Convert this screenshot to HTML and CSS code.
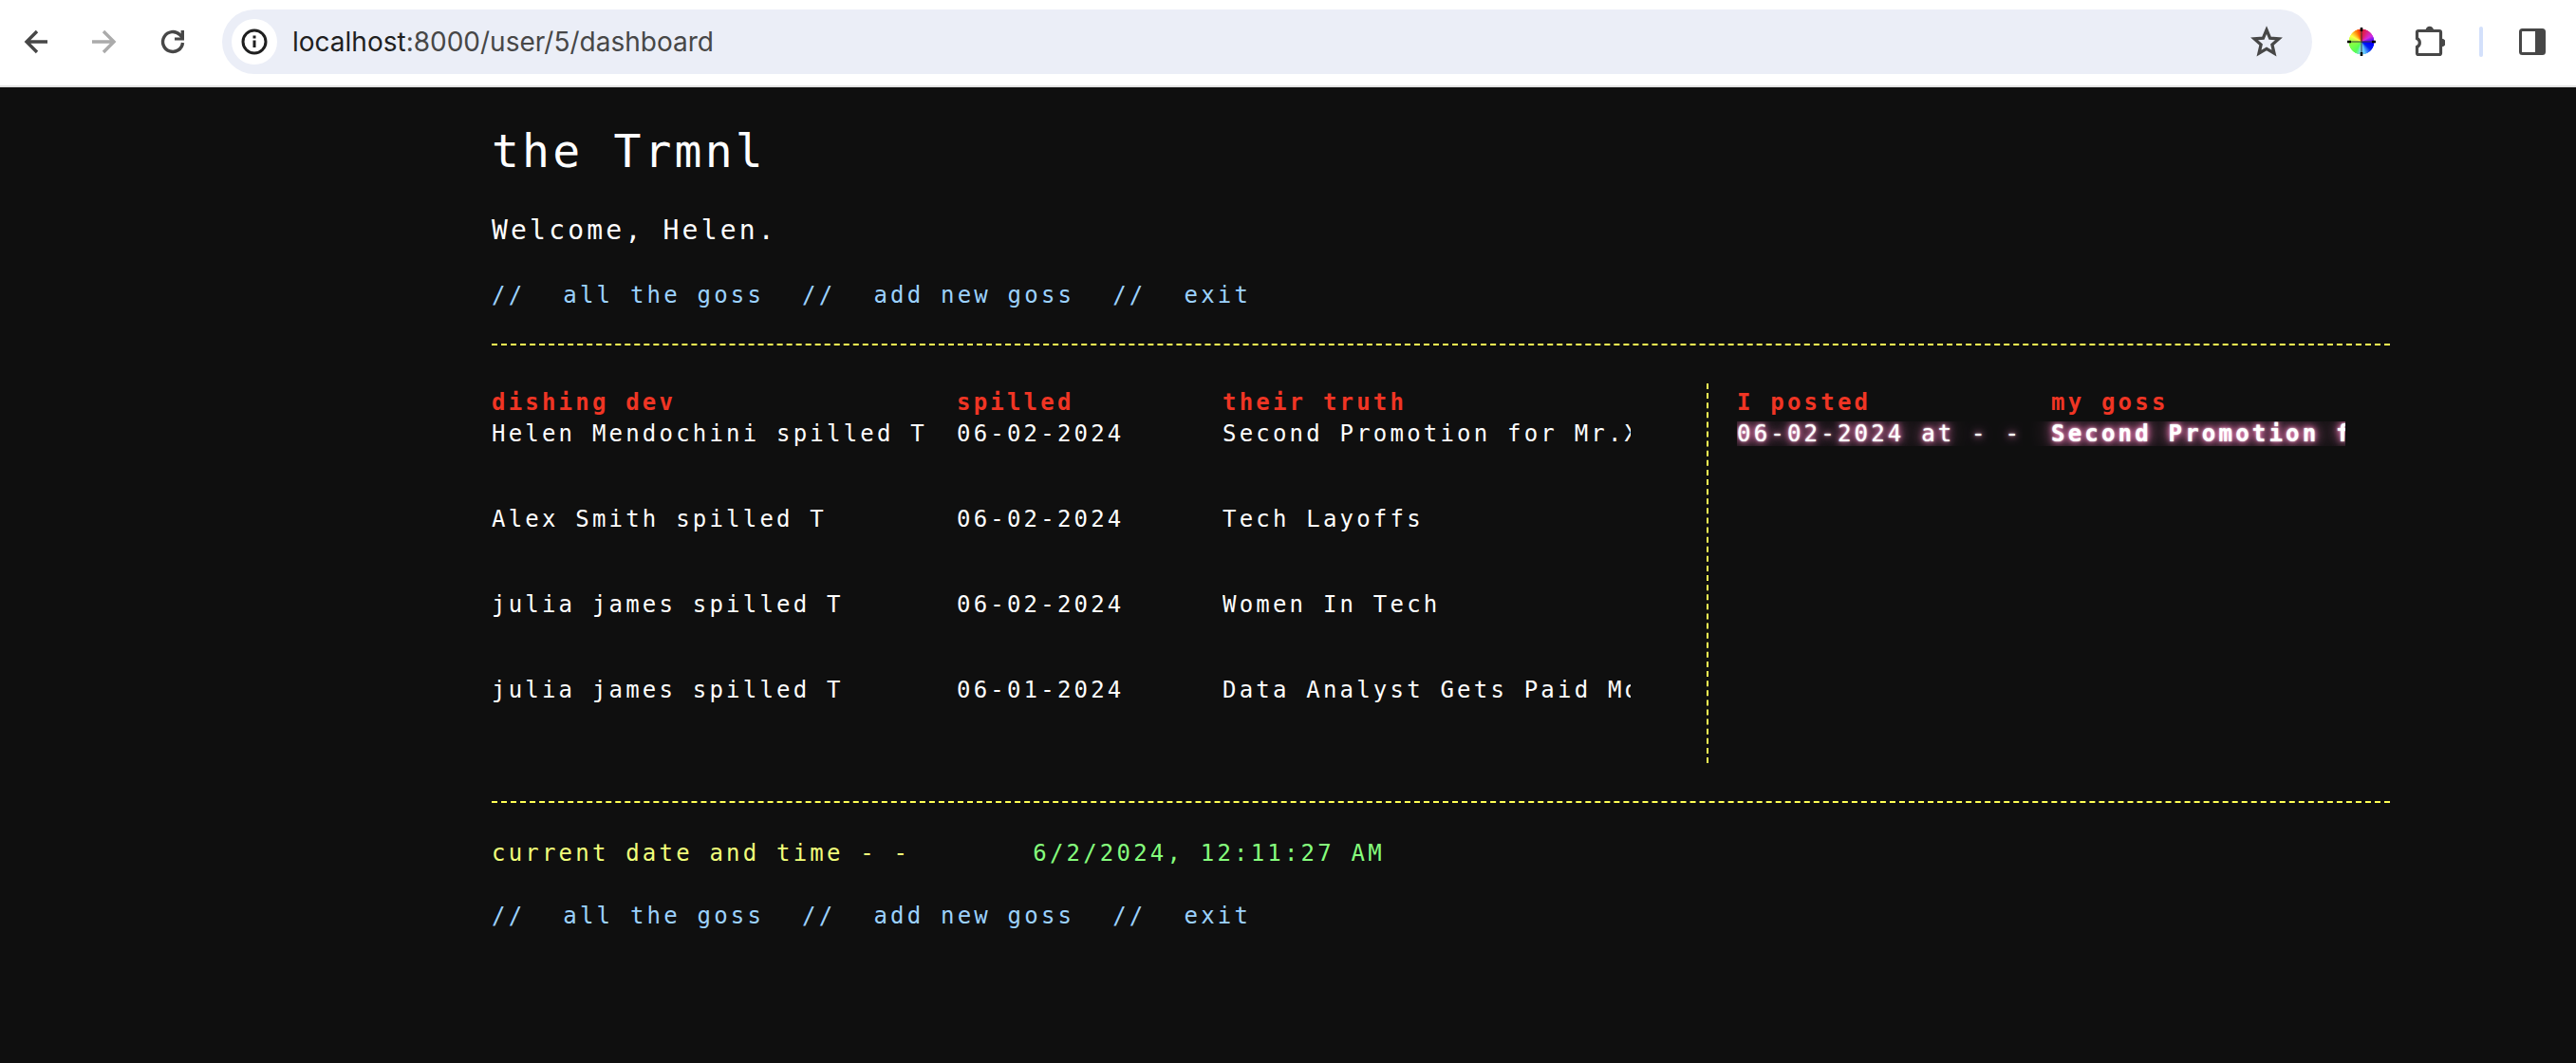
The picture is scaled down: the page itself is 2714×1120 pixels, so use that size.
FILE: index.html
```html
<!DOCTYPE html>
<html lang="en">
<head>
<meta charset="utf-8">
<meta name="viewport" content="width=device-width, initial-scale=1">
<title>the Trmnl</title>
<link rel="stylesheet" href="styles.css">
</head>
<body>
<header class="toolbar">
  <button class="tool" type="button" aria-label="Back">
    <svg class="icon" viewBox="0 0 32 32"><path d="M28 16H6M17 5L6 16l11 11" fill="none" stroke="#474747" stroke-width="3.4"/></svg>
  </button>
  <button class="tool" type="button" aria-label="Forward">
    <svg class="icon" viewBox="0 0 32 32"><path d="M3 16h22M15 5l11 11-11 11" fill="none" stroke="#ababab" stroke-width="3.4"/></svg>
  </button>
  <button class="tool" type="button" aria-label="Reload">
    <svg class="icon" viewBox="0 0 32 32"><path d="M26.500 17a10.500 10.500 0 1 1-3.100-8.500L26 11.500" fill="none" stroke="#474747" stroke-width="3.400"/><path d="M28 4v10.500H18v-3h6.600V4z" fill="#474747"/></svg>
  </button>
  <div class="omnibox">
    <button class="info" type="button" aria-label="Site information">
      <svg class="icon" viewBox="0 0 32 32"><circle cx="16" cy="16" r="12" fill="none" stroke="#1f1f1f" stroke-width="3"/><path d="M16 14.500V22M16 9.500v3" stroke="#1f1f1f" stroke-width="3"/></svg>
    </button>
    <div class="address" role="textbox" aria-label="Address"><span class="host">localhost</span>:8000/user/5/dashboard</div>
    <button class="tool" type="button" aria-label="Bookmark">
      <svg class="icon large" viewBox="0 0 36 36"><path d="M18 5.500l3.600 8.600 9.300.800-7 6.100 2.100 9.100-8-4.800-8 4.800 2.100-9.100-7-6.100 9.300-.8z" fill="none" stroke="#474747" stroke-width="3.300"/></svg>
    </button>
  </div>
  <div class="extensions">
    <button class="tool" type="button" aria-label="Colour picker">
      <span class="wheel"><svg class="icon" viewBox="0 0 32 32"><path d="M16 3v26M3 16h26" stroke="#333" stroke-width="1"/><path d="M16 1v4M16 27v4M1 16h4M27 16h4" stroke="#000" stroke-width="2.500"/></svg></span>
    </button>
    <button class="tool" type="button" aria-label="Extensions">
      <svg class="icon large" viewBox="-1.500 1 36 36"><path d="M5 9q0-1.500 1.500-1.500h22Q30 7.500 30 9v22q0 1.500-1.500 1.500h-22Q5 32.500 5 31v-6.500a5 5 0 0 0 0-9z" fill="none" stroke="#474747" stroke-width="3.200"/><path d="M14 7a4.300 4.300 0 0 1 8.600 0zM31 15.700a4.300 4.300 0 0 1 0 8.600z" fill="#474747"/></svg>
    </button>
    <span class="divider"></span>
    <button class="tool" type="button" aria-label="Side panel">
      <svg class="icon" viewBox="0 0 32 32"><rect x="3.500" y="3.500" width="25" height="25" rx="2" fill="none" stroke="#474747" stroke-width="3"/><path d="M19 3h10v26H19z" fill="#474747"/></svg>
    </button>
  </div>
</header>

<main class="terminal">
  <h1 class="title">the Trmnl</h1>
  <p class="welcome">Welcome, Helen.</p>
  <nav class="menu" aria-label="Main">
    <span>//</span><a href="#all">all the goss</a>
    <span>//</span><a href="#new">add new goss</a>
    <span>//</span><a href="#exit">exit</a>
  </nav>

  <section class="board">
    <div class="feed">
      <table class="goss feed-table">
        <thead>
          <tr><th class="dev">dishing dev</th><th class="date">spilled</th><th>their truth</th></tr>
        </thead>
        <tbody>
          <tr><td>Helen Mendochini spilled T</td><td>06-02-2024</td><td><div class="clip">Second Promotion for Mr.X</div></td></tr>
          <tr><td>Alex Smith spilled T</td><td>06-02-2024</td><td><div class="clip">Tech Layoffs</div></td></tr>
          <tr><td>julia james spilled T</td><td>06-02-2024</td><td><div class="clip">Women In Tech</div></td></tr>
          <tr><td>julia james spilled T</td><td>06-01-2024</td><td><div class="clip">Data Analyst Gets Paid More</div></td></tr>
        </tbody>
      </table>
    </div>
    <div class="mine">
      <table class="goss mine-table">
        <thead>
          <tr><th class="posted">I posted</th><th class="own">my goss</th></tr>
        </thead>
        <tbody>
          <tr><td><div class="clip glow">06-02-2024 at - -</div></td><td><div class="clip glow own strong">Second Promotion for Mr.X</div></td></tr>
        </tbody>
      </table>
    </div>
  </section>

  <p class="clock"><span>current date and time - -</span><time class="now" datetime="2024-06-02T00:11:27">6/2/2024, 12:11:27 AM</time></p>
  <nav class="menu" aria-label="Footer">
    <span>//</span><a href="#all">all the goss</a>
    <span>//</span><a href="#new">add new goss</a>
    <span>//</span><a href="#exit">exit</a>
  </nav>
</main>
</body>
</html>
```
FILE: styles.css
```css
* {
  box-sizing: border-box;
}

html {
  font-size: 32px;
  background: #0f0f0f;
}

body {
  margin: 0;
  color: #fff;
  font: 24px/26px "DejaVu Sans Mono", monospace;
}

/* browser toolbar */
.toolbar {
  display: flex;
  align-items: center;
  gap: 36px;
  height: 92px;
  padding: 0 30px 2px 22px;
  border-bottom: 2px solid #e1e1e1;
  background: #fff;
}

.tool,
.info {
  display: flex;
  flex: none;
  padding: 0;
  border: 0;
  background: none;
}

.toolbar > .tool + .tool {
  margin-left: 4px;
}

.icon {
  display: block;
  width: 32px;
  height: 32px;
}

.large {
  width: 36px;
  height: 36px;
}

.omnibox {
  display: flex;
  flex: 1;
  align-items: center;
  height: 68px;
  padding: 0 30px 0 10px;
  border-radius: 34px;
  background: #ebeef7;
}

.info {
  align-items: center;
  justify-content: center;
  width: 48px;
  height: 48px;
  border-radius: 50%;
  background: #fff;
}

.address {
  flex: 1;
  padding-left: 16px;
  color: #474747;
  font: 28px/34px Inter, Roboto, sans-serif;
}

.host {
  color: #1f1f1f;
}

.extensions {
  display: flex;
  align-items: center;
  gap: 36px;
}

.wheel {
  border-radius: 50%;
  background: radial-gradient(circle closest-side, transparent 82%, #fff 86%),
    conic-gradient(#e31b2d, #d42be0 60deg, #00f 100deg, #0020f0 130deg, #6cf 165deg, #8df 185deg, #5f5 210deg, #8f4 260deg, #ff4 300deg, #f60 340deg, #e31b2d);
}

.divider {
  width: 4px;
  height: 32px;
  border-radius: 2px;
  background: #d3e0fb;
}

/* page */
.terminal {
  width: 2000px;
  max-width: 80%;
  margin-left: 518px;
  padding-top: 39px;
  letter-spacing: 0.1rem;
}

.title {
  margin: 0;
  font-size: 48px;
  font-weight: 400;
  line-height: 56px;
}

.welcome {
  margin: 40px 0 39px;
  font-size: 28px;
  line-height: 32px;
}

.menu {
  display: flex;
  gap: 40px;
  color: #9cd2ff;
}

.menu a {
  color: inherit;
  text-decoration: none;
}

.board {
  display: flex;
  margin: 38px 0 40px;
  padding: 40px 0;
  border: dashed #ffff54;
  border-width: 2px 0;
}

.feed {
  width: 1282px;
  height: 400px;
  padding-top: 7px;
  border-right: 2px dashed #ffff54;
}

.mine {
  flex: 1;
  padding: 7px 0 0 30px;
}

.goss {
  border-collapse: collapse;
  table-layout: fixed;
}

.feed-table {
  width: 1200px;
}

.mine-table {
  width: 641px;
}

.goss th {
  height: 33px;
  padding: 0;
  color: #f03524;
  text-align: left;
  vertical-align: top;
}

.goss td {
  height: 90px;
  padding: 0;
  vertical-align: top;
  white-space: nowrap;
}

.goss .dev {
  width: 490px;
}

.goss .date {
  width: 280px;
}

.goss .posted {
  width: 301px;
}

.goss .own {
  padding-left: 30px;
}

.clip {
  overflow: hidden;
}

.glow {
  text-shadow: 0 0 2px #fff, 0 0 6px #ff80c0, 0 0 12px #ff80c0, 0 0 24px #ff80c0;
}

.strong {
  font-weight: 700;
}

.clock {
  display: flex;
  gap: 129px;
  margin: 0 0 40px;
  color: #f1ff7a;
}

.now {
  color: #86ff7d;
}
```
